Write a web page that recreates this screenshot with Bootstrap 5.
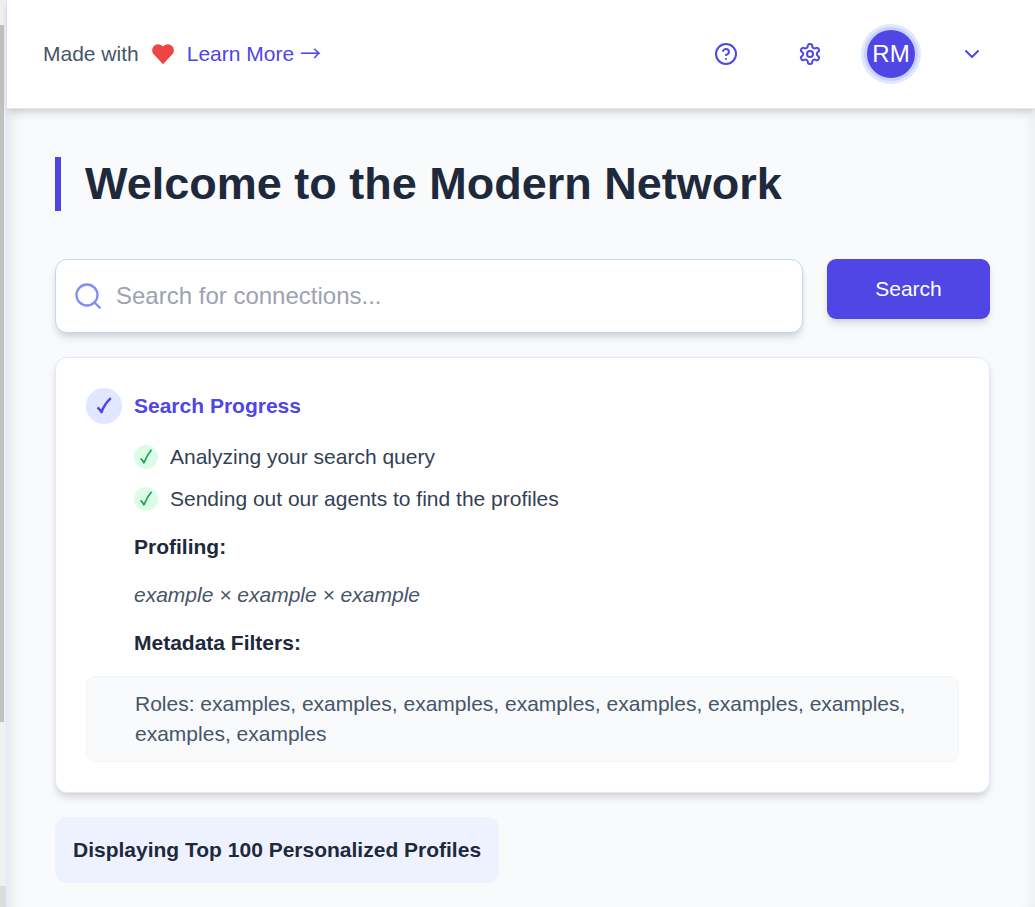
<!DOCTYPE html>
<html lang="en">
<head>
<meta charset="utf-8">
<meta name="viewport" content="width=device-width, initial-scale=1">
<title>Modern Network</title>
<link rel="stylesheet" href="https://cdn.jsdelivr.net/npm/bootstrap@5.3.0/dist/css/bootstrap.min.css">
<style>
  :root { --indigo: #4f46e5; --ink: #1e293b; --slate: #475569; }
  body { font-family: "Liberation Sans", Arial, sans-serif; font-size: 21px; line-height: 30px; color: var(--slate); background: #f8fafc; }
  svg { display: block; flex: none; }
  .rail { width: 7px; background: #f0f0f0; border-right: 1px solid #e0e7ff; }
  .rail-top { height: 25px; }
  .rail-thumb { width: 4px; flex: 697 0 0; background: #c1c1c1; }
  .rail-gap { flex: 164 0 0; }
  .rail-end { height: 21px; background: #dcdcdc; }
  .page { min-width: 0; box-shadow: inset 18px 0 18px -18px rgba(0,0,0,.12), inset -18px 0 18px -18px rgba(0,0,0,.08); }
  .topbar { padding: 24px 36px; background: #fff; border-bottom: 1px solid #e5e7eb; min-height: 109px; }
  .raised { box-shadow: 0 6px 9px -1px rgba(0,0,0,.1), 0 3px 6px -2px rgba(0,0,0,.1); }
  .learn { color: var(--indigo); text-decoration: none; }
  .arrow { font-family: "Noto Sans CJK SC", sans-serif; line-height: 1; }
  .actions { gap: 27px; }
  .tools { gap: 30px; }
  .icon-btn { color: var(--indigo); border: 0; background: none; padding: 15px; border-radius: 50%; }
  .avatar { width: 54px; height: 54px; padding: 0; border: 3px solid #c7d2fe; border-radius: 50%; background: var(--indigo); color: #fff; font-size: 24px; box-shadow: 0 0 0 3px #e0e7ff; }
  main { padding: 48px 45px 24px 48px; }
  .hero { font-size: 45px; line-height: 54px; font-weight: 700; color: var(--ink); border-left: 6px solid var(--indigo); padding-left: 24px; margin-bottom: 48px; }
  .searchbox { height: 74px; background: #fff; border: 1px solid #c7d2fe; border-radius: 12px; padding: 0 18px; gap: 14px; color: #818cf8; }
  .searchbox input { border: 0; padding: 0; font-size: 24px; line-height: 36px; background: transparent; box-shadow: none !important; }
  .searchbox input::placeholder { color: #9ca3af; }
  .go { width: 163px; height: 60px; font-size: 21px; color: #fff; background: var(--indigo); border: 0; border-radius: 9px; }
  .go:hover { color: #fff; background: #4338ca; }
  .panel { background: #fff; border: 1px solid #e0e7ff; border-radius: 12px; padding: 30px; gap: 18px; margin-bottom: 24px; }
  .panel h2, .panel h3 { font-size: 21px; line-height: 30px; font-weight: 700; margin: 0; }
  .panel h2 { color: var(--indigo); }
  .panel h3 { color: var(--ink); }
  .inset-row { padding-left: 48px; }
  .gap-12 { gap: 12px; }
  .tick { width: 24px; height: 24px; border-radius: 50%; background: #dcfce7; color: #16a34a; }
  .tick-lead { width: 36px; height: 36px; background: #e0e7ff; color: var(--indigo); }
  .steps { color: #334155; }
  .roles { background: #f8fafc; border: 1px solid #f1f5f9; border-radius: 9px; padding: 12px 48px; }
  .summary { background: #eef2ff; color: var(--ink); font-weight: 700; padding: 18px; border-radius: 12px; }
</style>
</head>
<body>
<div class="d-flex min-vh-100">
  <div class="rail d-flex flex-column flex-shrink-0" aria-hidden="true">
    <div class="rail-top"></div><div class="rail-thumb"></div><div class="rail-gap"></div><div class="rail-end"></div>
  </div>
  <div class="page flex-grow-1">
    <header class="topbar raised d-flex align-items-center justify-content-between">
      <div class="d-flex align-items-center gap-12">
        <span>Made with</span>
        <svg width="24" height="24" viewBox="0 0 24 24" fill="#ef4444" role="img" aria-label="love"><path d="M12 22.300L2.900 12.500a5.900 5.900 0 0 1 0-8.500 5.900 5.900 0 0 1 8.300-.2l.8.7.8-.7a5.900 5.900 0 0 1 8.300.2 5.900 5.900 0 0 1 0 8.500z"/></svg>
        <a class="learn" href="#">Learn More <span class="arrow">→</span></a>
      </div>
      <div class="actions d-flex align-items-center">
        <div class="tools d-flex">
          <button class="icon-btn" type="button" aria-label="Help">
            <svg width="24" height="24" viewBox="0 0 24 24" fill="none" stroke="currentColor" stroke-width="2" stroke-linecap="round" stroke-linejoin="round"><circle cx="12" cy="12" r="10"/><path d="M9.090 9a3 3 0 0 1 5.830 1c0 2-3 3-3 3M12 17h.01"/></svg>
          </button>
          <button class="icon-btn" type="button" aria-label="Settings">
            <svg width="24" height="24" viewBox="0 0 24 24" fill="none" stroke="currentColor" stroke-width="2" stroke-linecap="round" stroke-linejoin="round"><path d="M12.220 2h-.44a2 2 0 0 0-2 2v.18a2 2 0 0 1-1 1.730l-.43.25a2 2 0 0 1-2 0l-.15-.08a2 2 0 0 0-2.730.73l-.22.38a2 2 0 0 0 .73 2.730l.15.1a2 2 0 0 1 1 1.720v.51a2 2 0 0 1-1 1.740l-.15.09a2 2 0 0 0-.73 2.730l.22.38a2 2 0 0 0 2.730.73l.15-.08a2 2 0 0 1 2 0l.43.25a2 2 0 0 1 1 1.730V20a2 2 0 0 0 2 2h.44a2 2 0 0 0 2-2v-.18a2 2 0 0 1 1-1.730l.43-.25a2 2 0 0 1 2 0l.15.08a2 2 0 0 0 2.730-.73l.22-.39a2 2 0 0 0-.73-2.730l-.15-.08a2 2 0 0 1-1-1.740v-.5a2 2 0 0 1 1-1.740l.15-.09a2 2 0 0 0 .73-2.730l-.22-.38a2 2 0 0 0-2.730-.73l-.15.08a2 2 0 0 1-2 0l-.43-.25a2 2 0 0 1-1-1.730V4a2 2 0 0 0-2-2z"/><circle cx="12" cy="12" r="3"/></svg>
          </button>
        </div>
        <button class="avatar" type="button">RM</button>
        <button class="icon-btn" type="button" aria-label="Account menu">
          <svg width="24" height="24" viewBox="0 0 24 24" fill="none" stroke="currentColor" stroke-width="2" stroke-linecap="round" stroke-linejoin="round"><path d="M6 9l6 6 6-6"/></svg>
        </button>
      </div>
    </header>
    <main>
      <h1 class="hero">Welcome to the Modern Network</h1>
      <form class="d-flex align-items-start gap-4 mb-4">
        <div class="searchbox raised d-flex align-items-center flex-grow-1">
          <svg width="28" height="28" viewBox="0 0 28 28" fill="none" stroke="currentColor" stroke-width="2.300" stroke-linecap="round"><circle cx="13" cy="13" r="10.500"/><path d="M20.500 20.500l5.300 5.300"/></svg>
          <input class="form-control" type="text" placeholder="Search for connections..." aria-label="Search for connections">
        </div>
        <button class="btn go raised" type="button">Search</button>
      </form>
      <section class="panel raised d-flex flex-column">
        <div class="d-flex align-items-center gap-12">
          <span class="tick tick-lead d-flex align-items-center justify-content-center"><svg width="18" height="18" viewBox="0 0 18 18" fill="none" stroke="currentColor" stroke-width="2.500" stroke-linejoin="round"><path d="M2.500 10.500q2 1.500 4 4.700Q9.500 7 15.800 1.200"/></svg></span>
          <h2>Search Progress</h2>
        </div>
        <div class="steps inset-row d-flex flex-column gap-12">
          <div class="d-flex align-items-center gap-12"><span class="tick d-flex align-items-center justify-content-center"><svg width="18" height="18" viewBox="0 0 18 18" fill="none" stroke="currentColor" stroke-width="1.700" stroke-linejoin="round"><path d="M3.500 10.500q2 1 3.500 4.300Q10 7 14.500 1.800"/></svg></span><span>Analyzing your search query</span></div>
          <div class="d-flex align-items-center gap-12"><span class="tick d-flex align-items-center justify-content-center"><svg width="18" height="18" viewBox="0 0 18 18" fill="none" stroke="currentColor" stroke-width="1.700" stroke-linejoin="round"><path d="M3.500 10.500q2 1 3.500 4.300Q10 7 14.500 1.800"/></svg></span><span>Sending out our agents to find the profiles</span></div>
        </div>
        <h3 class="inset-row">Profiling:</h3>
        <em class="inset-row">example × example × example</em>
        <h3 class="inset-row">Metadata Filters:</h3>
        <div class="roles">Roles: examples, examples, examples, examples, examples, examples, examples, examples, examples</div>
      </section>
      <div class="summary d-inline-block">Displaying Top 100 Personalized Profiles</div>
    </main>
  </div>
</div>
<script src="https://cdn.jsdelivr.net/npm/bootstrap@5.3.0/dist/js/bootstrap.bundle.min.js"></script>
</body>
</html>
